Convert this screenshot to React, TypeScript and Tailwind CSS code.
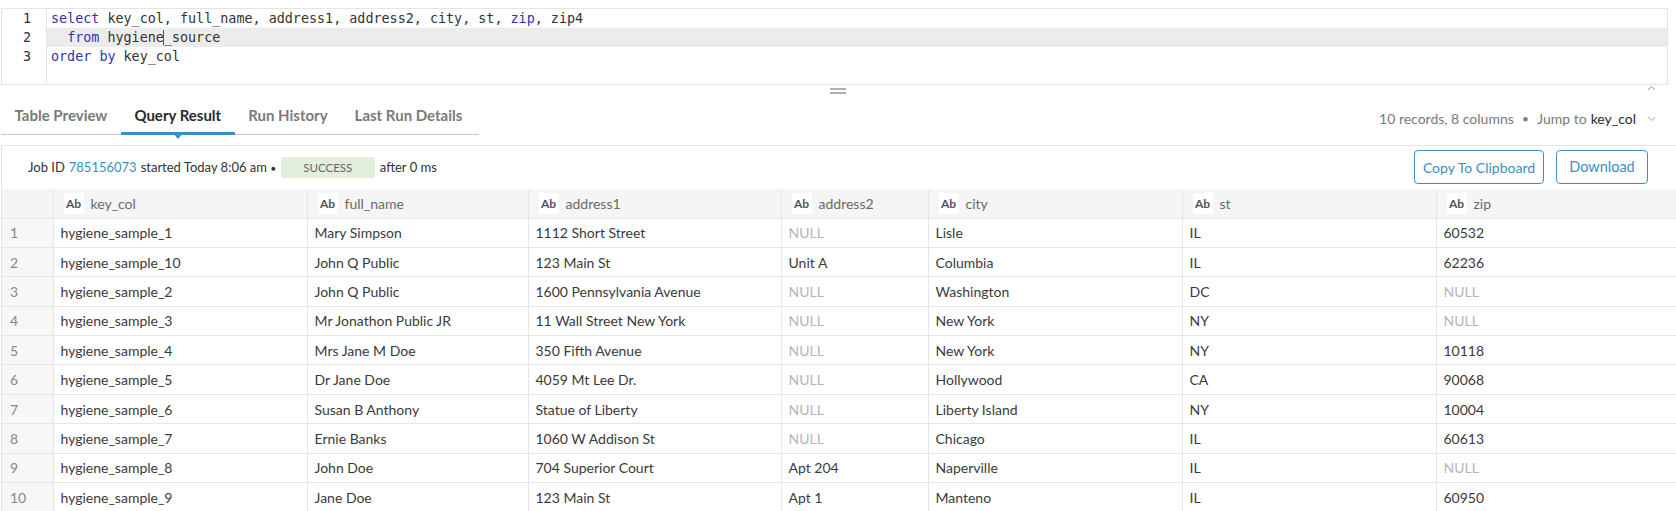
import React from 'react'

type Cell = string | null

const columns = [
  { name: 'key_col', w: 'w-[254px]' },
  { name: 'full_name', w: 'w-[221px]' },
  { name: 'address1', w: 'w-[253px]' },
  { name: 'address2', w: 'w-[147px]' },
  { name: 'city', w: 'w-[254px]' },
  { name: 'st', w: 'w-[254px]' },
  { name: 'zip', w: 'w-[260px]' },
]

const rows: Cell[][] = [
  ['hygiene_sample_1', 'Mary Simpson', '1112 Short Street', null, 'Lisle', 'IL', '60532'],
  ['hygiene_sample_10', 'John Q Public', '123 Main St', 'Unit A', 'Columbia', 'IL', '62236'],
  ['hygiene_sample_2', 'John Q Public', '1600 Pennsylvania Avenue', null, 'Washington', 'DC', null],
  ['hygiene_sample_3', 'Mr Jonathon Public JR', '11 Wall Street New York', null, 'New York', 'NY', null],
  ['hygiene_sample_4', 'Mrs Jane M Doe', '350 Fifth Avenue', null, 'New York', 'NY', '10118'],
  ['hygiene_sample_5', 'Dr Jane Doe', '4059 Mt Lee Dr.', null, 'Hollywood', 'CA', '90068'],
  ['hygiene_sample_6', 'Susan B Anthony', 'Statue of Liberty', null, 'Liberty Island', 'NY', '10004'],
  ['hygiene_sample_7', 'Ernie Banks', '1060 W Addison St', null, 'Chicago', 'IL', '60613'],
  ['hygiene_sample_8', 'John Doe', '704 Superior Court', 'Apt 204', 'Naperville', 'IL', null],
  ['hygiene_sample_9', 'Jane Doe', '123 Main St', 'Apt 1', 'Manteno', 'IL', '60950'],
]

const tabs = ['Table Preview', 'Query Result', 'Run History', 'Last Run Details']

function Kw({ children }: { children: React.ReactNode }) {
  return <span className="text-[#3333b3]">{children}</span>
}

function Editor() {
  return (
    <div className="ml-px mr-[8px] h-[77px] border border-[#e4e4e4] flex font-['DejaVu_Sans_Mono',monospace] text-[13.4px] text-[#333]">
      <div className="w-[45px] shrink-0 border-r border-[#e4e4e4] text-right">
        {[1, 2, 3].map((n) => (
          <div key={n} className="h-[19px] leading-[19px] pr-[15px]">{n}</div>
        ))}
      </div>
      <div className="flex-1 whitespace-pre">
        <div className="h-[19px] leading-[19px] pl-[4px]">
          <Kw>select</Kw> key_col, full_name, address1, address2, city, st, <Kw>zip</Kw>, zip4
        </div>
        <div className="h-[19px] leading-[19px] pl-[4px] bg-[#ececec]">
          {'  '}<Kw>from</Kw> hygiene<span className="border-l border-[#555] -ml-px" />_source
        </div>
        <div className="h-[19px] leading-[19px] pl-[4px]">
          <Kw>order</Kw> <Kw>by</Kw> key_col
        </div>
      </div>
    </div>
  )
}

function TabBar() {
  return (
    <div className="h-[45px] flex items-end justify-between">
      <div className="flex border-b border-[#c8c8c8] w-[478px] ml-px mb-[10px]">
        {tabs.map((t) => {
          const active = t === 'Query Result'
          return (
            <div
              key={t}
              className={`relative px-[13.5px] pb-[6px] text-[15px] font-bold ${
                active ? 'text-[#2b2b2b] border-b-[3px] border-[#3a8fc7] -mb-px' : 'text-[#7a7a7a] pb-[8px]'
              }`}
            >
              {t}
              {active && (
                <div className="absolute left-1/2 -translate-x-1/2 top-full mt-px w-0 h-0 border-l-[5px] border-r-[5px] border-t-[6px] border-l-transparent border-r-transparent border-t-[#3a8fc7]" />
              )}
            </div>
          )
        })}
      </div>
      <div className="flex items-center pb-[16px] pr-[20px] text-[14px] text-[#7a7a7a]">
        <span>10 records, 8 columns</span>
        <span className="mx-[9px] text-[9px]">●</span>
        <span>Jump to</span>
        <span className="ml-[4px] text-[#2b2b2b]">key_col</span>
        <svg className="ml-[11px]" width="9" height="6" viewBox="0 0 9 6">
          <path d="M1 1l3.5 3.5L8 1" fill="none" stroke="#aaa" strokeWidth="1" />
        </svg>
      </div>
    </div>
  )
}

function DataTable() {
  return (
    <table className="table-fixed w-[1694px] border-collapse text-[14px] text-[#3a3a3a]">
      <thead>
        <tr className="h-[29px] bg-[#f5f5f5]">
          <th className="w-[51px] border-r border-b border-[#e6e6e6]" />
          {columns.map((c) => (
            <th key={c.name} className={`${c.w} border-r border-b border-[#e6e6e6] text-left font-normal pl-[10px]`}>
              <div className="flex items-center">
                <span className="bg-white w-[20px] text-center h-[21px] leading-[21px] text-[12px] font-bold text-[#555]">Ab</span>
                <span className="ml-[7px] text-[#6a6a6a]">{c.name}</span>
              </div>
            </th>
          ))}
        </tr>
      </thead>
      <tbody>
        {rows.map((r, i) => (
          <tr key={i} className="h-[29.4px]">
            <td className="bg-[#f7f7f7] border-r border-b border-[#e6e6e6] pl-[8px] text-[#888]">{i + 1}</td>
            {r.map((v, j) => (
              <td key={j} className="border-r border-b border-[#e6e6e6] px-[7px] whitespace-nowrap overflow-hidden">
                {v === null ? <span className="text-[#b5b5b5]">NULL</span> : v}
              </td>
            ))}
          </tr>
        ))}
      </tbody>
    </table>
  )
}

export default function App() {
  return (
    <div className="w-[1676px] h-[511px] overflow-hidden bg-white font-['Lato','Noto_Sans',sans-serif]">
      <div className="pt-[8px]">
        <Editor />
      </div>

      <div className="h-[15px] grid grid-cols-[1fr_auto_1fr] items-center">
        <div />
        <div className="w-[16px] flex flex-col gap-[2px] -mt-[3px]">
          <div className="h-[2px] bg-[#b0b0b0]" />
          <div className="h-[2px] bg-[#b0b0b0]" />
        </div>
        <div className="flex justify-end pr-[20px] -mt-[9px]">
          <svg width="9" height="6" viewBox="0 0 9 6">
            <path d="M1 5l3.5-3.5L8 5" fill="none" stroke="#999" strokeWidth="1" />
          </svg>
        </div>
      </div>

      <TabBar />

      <div className="border-t border-l border-[#e4e4e4] ml-px">
        <div className="h-[43px] flex items-center justify-between pl-[26px] pr-[28px] text-[13px] text-[#333]">
          <div className="flex items-center">
            <span>Job ID</span>
            <span className="ml-[4px] text-[#3a8fc7]">785156073</span>
            <span className="ml-[4px]">started Today 8:06 am</span>
            <span className="ml-[4px] text-[8px]">●</span>
            <span className="ml-[5px] h-[21px] w-[94px] justify-center flex items-center rounded-[3px] bg-[#e3efdc] text-[11.5px] text-[#666]">SUCCESS</span>
            <span className="ml-[5px]">after 0 ms</span>
          </div>
          <div className="flex items-center gap-[12px] -mt-[1px]">
            <button className="h-[34px] w-[130px] rounded-[4px] border border-[#3a8fc7] text-[#3a8fc7] text-[14px]">
              Copy To Clipboard
            </button>
            <button className="h-[34px] w-[92px] rounded-[4px] border border-[#3a8fc7] text-[#3a8fc7] text-[14.5px]">
              Download
            </button>
          </div>
        </div>
        <DataTable />
      </div>
    </div>
  )
}
